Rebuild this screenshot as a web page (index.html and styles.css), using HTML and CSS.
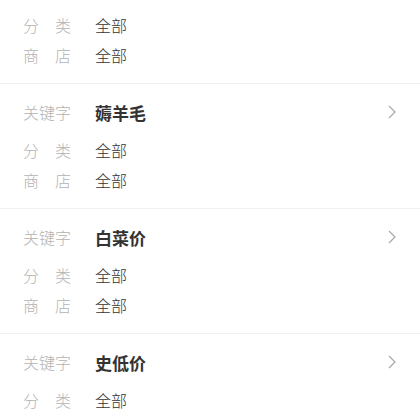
FILE: index.html
```html
<!DOCTYPE html>
<html lang="zh-CN">
<head>
    <meta charset="UTF-8">
    <meta name="viewport" content="width=device-width, initial-scale=1.0">
    <title>订阅列表</title>
    <link rel="stylesheet" href="styles.css">
</head>
<body>
    <div class="list">
        <div class="card card-first">
            <div class="row"><span class="label">分类</span><span class="value">全部</span></div>
            <div class="row"><span class="label">商店</span><span class="value">全部</span></div>
        </div>

        <div class="card">
            <div class="row keyword">
                <span class="label">关键字</span><span class="value">薅羊毛</span>
                <svg class="arrow" width="8" height="14" viewBox="0 0 8 14"><polyline points="1,1 7,7 1,13" fill="none" stroke="#a8a8a8" stroke-width="1.2"/></svg>
            </div>
            <div class="row"><span class="label">分类</span><span class="value">全部</span></div>
            <div class="row"><span class="label">商店</span><span class="value">全部</span></div>
        </div>

        <div class="card">
            <div class="row keyword">
                <span class="label">关键字</span><span class="value">白菜价</span>
                <svg class="arrow" width="8" height="14" viewBox="0 0 8 14"><polyline points="1,1 7,7 1,13" fill="none" stroke="#a8a8a8" stroke-width="1.2"/></svg>
            </div>
            <div class="row"><span class="label">分类</span><span class="value">全部</span></div>
            <div class="row"><span class="label">商店</span><span class="value">全部</span></div>
        </div>

        <div class="card">
            <div class="row keyword">
                <span class="label">关键字</span><span class="value">史低价</span>
                <svg class="arrow" width="8" height="14" viewBox="0 0 8 14"><polyline points="1,1 7,7 1,13" fill="none" stroke="#a8a8a8" stroke-width="1.2"/></svg>
            </div>
            <div class="row"><span class="label">分类</span><span class="value">全部</span></div>
            <div class="row"><span class="label">商店</span><span class="value">全部</span></div>
        </div>
    </div>
</body>
</html>
```

FILE: styles.css
```css
body {
    margin: 0;
    background: #fff;
    font-family: "Noto Sans CJK SC", "Noto Sans", sans-serif;
    overflow: hidden;
}

.card {
    padding: 13px 24px 13px 23px;
    border-bottom: 1px solid #f0f0f0;
}

.card-first {
    padding-top: 10px;
}

.row {
    display: flex;
    align-items: center;
    height: 30px;
    font-size: 16px;
    font-weight: 300;
}

.keyword {
    margin-bottom: 8px;
}

.label {
    width: 48px;
    margin-right: 24px;
    color: #b3b3b3;
    text-align: justify;
    text-align-last: justify;
}

.value {
    color: #333;
}

.keyword .value {
    font-size: 17px;
    font-weight: bold;
}

.arrow {
    margin-left: auto;
}
```
